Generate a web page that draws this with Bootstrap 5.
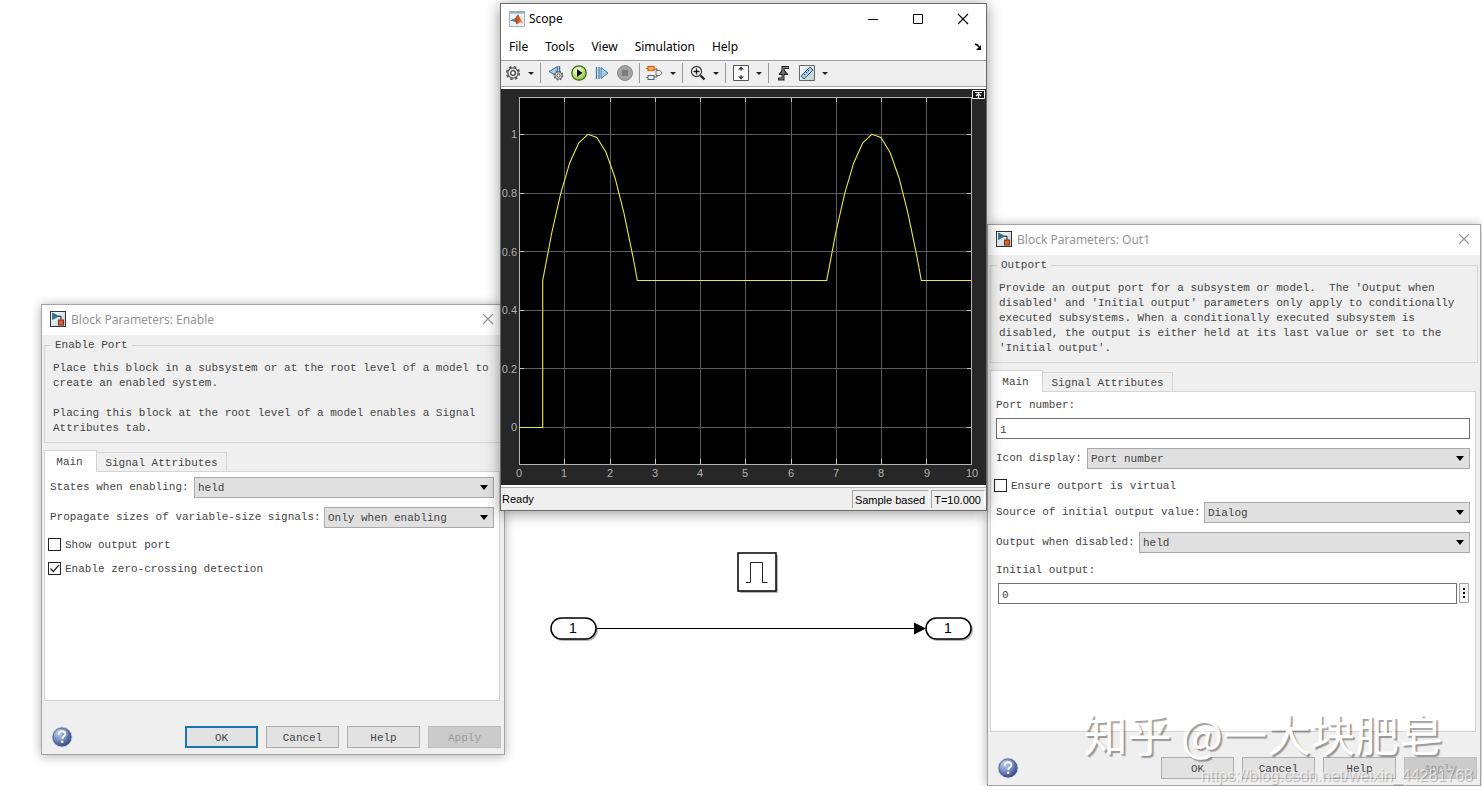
<!DOCTYPE html>
<html lang="en">
<head>
<meta charset="utf-8">
<meta name="viewport" content="width=device-width, initial-scale=1">
<title>Scope and block parameters</title>
<link href="https://cdn.jsdelivr.net/npm/bootstrap@5.3.0/dist/css/bootstrap.min.css" rel="stylesheet">
<style>
  :root { --ui: "Noto Sans", "Noto Sans CJK SC", sans-serif; --mono: "Liberation Mono", monospace; --panel: #efefef; --line: #d4d4d4; }
  body { background: #fff; font-family: var(--ui); font-size: 12px; line-height: 15px; color: #000; }
  .desktop { padding: 3px 1px 0 41px; }
  .win { border: 1px solid #a3a3a3; background: var(--panel); box-shadow: 0 1px 10px rgba(0,0,0,.32); min-width: 0; }
  .win-enable { flex: 462 1 0; margin-top: 301px; }
  .center-col { flex: 487 1 0; margin-left: -5px; z-index: 2; min-width: 0; }
  .win-outport { flex: 492 1 0; margin-top: 221px; }
  .win-scope { border-color: #6a6a6a; box-shadow: 0 2px 14px rgba(0,0,0,.42); }
  .plain { border: 0; background: none; padding: 0; line-height: 0; color: inherit; }
  svg { display: block; }

  /* parameter dialogs */
  .dlg-title { height: 30px; padding: 0 10px 2px 8px; gap: 5px; background: #fff; color: #949494; }
  .dlg-body { padding: 0 2px; font-family: var(--mono); font-size: 11px; color: #444; }
  .group { border: 1px solid var(--line); padding: 6px 8px; margin-bottom: 7px; }
  .group legend { float: none; width: auto; height: 20px; line-height: 20px; margin: 0 0 0 -2px; padding: 0 4px; font-size: 11px; }
  .group p { margin: 0; white-space: pre; }
  .tabs { align-items: flex-end; height: 21px; }
  .tabs button { border: 1px solid var(--line); border-bottom: 0; background: #f0f0f0; color: #444; height: 19px; width: 131px; padding: 2px 0 0; font-size: 11px; line-height: 15px; border-radius: 0; }
  .tabs button.active { background: #fff; height: 22px; width: 53px; margin: 0 -1px -1px 0; z-index: 1; padding: 1px 2px 0 0; }
  .pane { border: 1px solid var(--line); background: #fff; margin-right: 2px; padding: 5px 5px 5px 3px; gap: 10px; }
  .pane-enable { min-height: 230px; }
  .pane-outport { min-height: 341px; }
  .fld { padding-left: 2px; }
  .fld label { white-space: nowrap; }
  .fld .box, .fld select { font-size: 11px; height: 21px; line-height: 15px; border-radius: 0; color: #444; min-width: 0; flex: 1 1 0; }
  .fld .box { border: 1px solid #6f6f6f; background: #fff; padding: 2px 3px 0; margin: 0; }
  .fld select { appearance: none; border: 1px solid #a9a9a9; padding: 2px 18px 0 3px; background: #e0e0e0 url("data:image/svg+xml,%3Csvg xmlns='http://www.w3.org/2000/svg' width='8' height='5'%3E%3Cpath d='M0 0h8L4 5z' fill='%23000'/%3E%3C/svg%3E") no-repeat right 5px center; }
  .one { height: 20px; }
  .stack { gap: 5px; }
  .stack label { height: 16px; padding-top: 1px; }
  .with-more { gap: 2px; padding: 0 1px 0 2px; }
  .w-a { width: 144px; } .w-b { width: 274px; } .w-c { width: 91px; } .w-d { width: 208px; } .w-e { width: 143px; }
  .tick { height: 14px; gap: 4px; }
  .tick label { padding-top: 2px; }
  .tick input { appearance: none; width: 13px; height: 13px; border: 1px solid #222; margin: 0; background: #fff center no-repeat; }
  .tick input:checked { background-image: url("data:image/svg+xml,%3Csvg xmlns='http://www.w3.org/2000/svg' width='11' height='11'%3E%3Cpath d='M1.5 5.5l2.8 3L10 2' fill='none' stroke='%23222' stroke-width='1.2'/%3E%3C/svg%3E"); }
  .foot { padding: 25px 1px 6px 7px; gap: 8px; }
  .foot .push { width: 73px; height: 22px; padding: 2px 0 0; border: 1px solid #adadad; border-radius: 0; background: #e2e2e2; color: #444; font-size: 11px; line-height: 15px; }
  .foot .push.primary { border: 2px solid #1a75b5; }
  .foot .push:disabled { background: #cbcbcb; border-color: #c0c0c0; color: #9a9a9a; }

  /* scope window */
  .scope-title { height: 29px; padding: 0 17px 0 8px; gap: 33px; background: #fff; }
  .scope-menu { height: 27px; padding: 0 4px 0 8px; gap: 17px; background: #fff; }
  .scope-menu a { color: #000; text-decoration: none; }
  .toolbar { height: 29px; border-top: 1px solid #9c9c9c; border-bottom: 2px solid #fff; padding-bottom: 2px; box-shadow: inset 0 -1px #a4a4a4; }
  .toolbar button { width: 23px; flex: none; display: flex; justify-content: center; }
  .toolbar .drop { width: 13px; }
  .toolbar .drop::after { content: ""; border: 3px solid transparent; border-top-color: #222; border-bottom: 0; }
  .toolbar hr { width: 1px; height: 20px; margin: 0 3px; border: 0; background: #999; opacity: 1; flex: none; }
  .statusbar { height: 25px; border-top: 2px solid #fff; font: 11px/15px "Liberation Sans", Arial, sans-serif; padding: 1px 1px 0 1px; gap: 2px; box-shadow: inset 0 1px #b0b0b0; }
  .cell { height: 18px; padding: 2px 3px 0 2px; border-left: 1px solid #a6a6a6; border-top: 1px solid #a6a6a6; border-right: 1px solid #fff; }
  .plot text, .canvas text { font-family: "Liberation Sans", Arial, sans-serif; }

  /* watermarks lie over the output dialog */
  .wm { position: absolute; z-index: 3; pointer-events: none; white-space: nowrap; }
  .wm-name { right: 39px; top: 703px; font: 44px/60px "Noto Sans CJK SC", sans-serif; color: #fff; text-shadow: 2px 2px 1px rgba(0,0,0,.36); }
  .wm-url { right: 9px; top: 767px; font: 16px/18px "Liberation Sans", Arial, sans-serif; color: rgba(255,255,255,.6); text-shadow: 1px 1px 1px rgba(0,0,0,.25); }
</style>
</head>
<body class="position-relative overflow-hidden">
<svg width="0" height="0" class="position-absolute" aria-hidden="true">
  <defs>
    <linearGradient id="paper" x2="1" y2="1"><stop stop-color="#fff"/><stop offset="1" stop-color="#b9cbd6"/></linearGradient>
    <radialGradient id="orb" cx=".35" cy=".3" r=".8"><stop stop-color="#c3d0ee"/><stop offset=".5" stop-color="#7189c0"/><stop offset="1" stop-color="#1f2e66"/></radialGradient>
    <radialGradient id="go" cx=".4" cy=".3" r=".8"><stop stop-color="#fafff0"/><stop offset=".6" stop-color="#b5dc70"/><stop offset="1" stop-color="#6da52c"/></radialGradient>
    <linearGradient id="peak" x2="1"><stop stop-color="#3b2a4c"/><stop offset=".4" stop-color="#c33a1c"/><stop offset="1" stop-color="#ef8b35"/></linearGradient>
    <symbol id="blk" viewBox="0 0 16 16"><rect x=".5" y=".5" width="15" height="15" fill="url(#paper)" stroke="#333"/><path d="M2.500 2v6.500L8.500 5.200z" fill="#2b7896" stroke="#174f68" stroke-width=".6"/><path d="M8 5.200h3V9" fill="none" stroke="#222"/><rect x="8.500" y="9" width="5" height="5" fill="#d9643a" stroke="#7d2d16"/></symbol>
    <symbol id="help" viewBox="0 0 22 22"><circle cx="11" cy="11" r="10" fill="url(#orb)" stroke="#d0d3dc"/><circle cx="11" cy="11" r="9" fill="none" stroke="#51608f" stroke-width=".7"/><path d="M7.800 8.400c0-4.200 6.600-4.200 6.600-.4 0 2.300-3.200 2.300-3.200 5" fill="none" stroke="#fff" stroke-width="2"/><circle cx="11.200" cy="15.800" r="1.300" fill="#fff"/></symbol>
    <symbol id="cross" viewBox="0 0 12 12"><path d="M1 1l10 10M11 1L1 11" fill="none" stroke="currentColor" stroke-width="1.100"/></symbol>
    <symbol id="gear" viewBox="0 0 16 16"><circle cx="8" cy="8" r="6.300" fill="none" stroke="#555" stroke-width="1.600" stroke-dasharray="2.600 2.350"/><circle cx="8" cy="8" r="5.200" fill="#dcdcdc" stroke="#555" stroke-width="1.200"/><circle cx="8" cy="8" r="2.300" fill="#fff" stroke="#444" stroke-width="1.300"/></symbol>
  </defs>
</svg>

<main class="desktop d-flex align-items-start">

  <section class="win win-enable" aria-label="Block Parameters: Enable">
    <header class="dlg-title d-flex align-items-center">
      <svg width="16" height="16"><use href="#blk"/></svg>
      <span>Block Parameters: Enable</span>
      <button class="plain ms-auto" aria-label="Close"><svg width="12" height="12"><use href="#cross"/></svg></button>
    </header>
    <div class="dlg-body">
      <fieldset class="group">
        <legend>Enable Port</legend>
        <p>Place this block in a subsystem or at the root level of a model to
create an enabled system.

Placing this block at the root level of a model enables a Signal
Attributes tab.</p>
      </fieldset>
      <div class="tabs d-flex" role="tablist">
        <button class="active" role="tab" aria-selected="true">Main</button>
        <button role="tab" aria-selected="false">Signal Attributes</button>
      </div>
      <div class="pane pane-enable d-flex flex-column" role="tabpanel">
        <div class="fld one d-flex align-items-center">
          <label class="w-a" for="states">States when enabling:</label>
          <select id="states"><option>held</option><option>reset</option></select>
        </div>
        <div class="fld one d-flex align-items-center">
          <label class="w-b" for="propagate">Propagate sizes of variable-size signals:</label>
          <select id="propagate"><option>Only when enabling</option></select>
        </div>
        <div class="tick d-flex align-items-center"><input type="checkbox" id="showport"><label for="showport">Show output port</label></div>
        <div class="tick d-flex align-items-center"><input type="checkbox" id="zerocross" checked><label for="zerocross">Enable zero-crossing detection</label></div>
      </div>
      <footer class="foot d-flex align-items-center">
        <button class="plain me-auto" aria-label="About this block"><svg width="22" height="22"><use href="#help"/></svg></button>
        <button class="push primary">OK</button>
        <button class="push">Cancel</button>
        <button class="push">Help</button>
        <button class="push" disabled>Apply</button>
      </footer>
    </div>
  </section>

  <div class="center-col">
    <section class="win win-scope" aria-label="Scope">
      <header class="scope-title d-flex align-items-center">
        <div class="d-flex align-items-center gap-1 me-auto">
          <svg width="16" height="16" viewBox="0 0 16 16"><rect x=".5" y=".5" width="15" height="15" fill="#eef3f7" stroke="#9fb1bf"/><path d="M1 1.500h14" stroke="#8fa9bd" stroke-width="2"/><path d="M1.500 9.500L6 7.500l3-4.500 5 9.500-3-1.500-3 2.500-2-3z" fill="url(#peak)"/><path d="M1.500 9.500L6 7.500 7 9l-1 1.800z" fill="#4a86b4"/></svg>
          <span>Scope</span>
        </div>
        <button class="plain" aria-label="Minimize"><svg width="12" height="12"><path d="M1 6.500h10" stroke="#000"/></svg></button>
        <button class="plain" aria-label="Maximize"><svg width="12" height="12"><path d="M1.500 1.500h9v9h-9z" fill="none" stroke="#000"/></svg></button>
        <button class="plain" aria-label="Close"><svg width="12" height="12"><use href="#cross"/></svg></button>
      </header>
      <nav class="scope-menu d-flex align-items-center">
        <a href="#">File</a><a href="#">Tools</a><a href="#">View</a><a href="#">Simulation</a><a href="#">Help</a>
        <button class="plain ms-auto" aria-label="Dock"><svg width="8" height="8"><path d="M1 1.500c1.500-.5 2.500 0 4 2.500" fill="none" stroke="#000" stroke-width="1.500"/><path d="M7 2v5H2z"/></svg></button>
      </nav>
      <div class="toolbar d-flex align-items-center" role="toolbar" aria-label="Scope tools">
        <button class="plain" aria-label="Configuration"><svg width="16" height="16"><use href="#gear"/></svg></button>
        <button class="plain drop" aria-label="Configuration menu"></button>
        <hr>
        <button class="plain" aria-label="Step back"><svg width="16" height="16" viewBox="0 0 16 16"><path d="M9.500 1.500L1 6.500l8.500 5z" fill="#a5c8e2" stroke="#3c6d94"/><path d="M11.500 1v6" stroke="#3c6d94" stroke-width="1.500"/><svg x="5" y="5" width="11" height="11"><use href="#gear"/></svg></svg></button>
        <button class="plain" aria-label="Run"><svg width="16" height="16" viewBox="0 0 16 16"><circle cx="8" cy="8" r="7.200" fill="url(#go)" stroke="#3f6b15" stroke-width="1.300"/><path d="M6 4v8l5.500-4z" fill="#111"/></svg></button>
        <button class="plain" aria-label="Step forward"><svg width="14" height="14" viewBox="0 0 14 14"><path d="M1.500 1v12M4 1v12" stroke="#3d78a6" stroke-width="1.300"/><path d="M6 1.500v11L13 7z" fill="#a9d0ea" stroke="#3d78a6"/></svg></button>
        <button class="plain" aria-label="Stop" disabled><svg width="16" height="16" viewBox="0 0 16 16"><circle cx="8" cy="8" r="7.500" fill="#a3a3a3" stroke="#8c8c8c"/><rect x="5" y="5" width="6" height="6" fill="#7b7b7b"/></svg></button>
        <hr>
        <button class="plain" aria-label="Highlight block"><svg width="17" height="16" viewBox="0 0 17 16"><path d="M7 4h4v3M7 12h4V9" fill="none" stroke="#555"/><rect x="2" y="1.500" width="6" height="4" fill="#fbb45c" stroke="#d4661a" stroke-width="1.300"/><path d="M0 3.500h2M0 12.500h2" stroke="#d4661a"/><rect x="2" y="10.500" width="6" height="4" fill="#e6eef6" stroke="#48627a"/><path d="M10 5.500h4l2 2.500-2 2.500h-4z" fill="#e6eef6" stroke="#777"/></svg></button>
        <button class="plain drop" aria-label="Highlight menu"></button>
        <hr>
        <button class="plain" aria-label="Zoom in"><svg width="16" height="16" viewBox="0 0 16 16"><circle cx="6.500" cy="6.500" r="5" fill="#fff" stroke="#444" stroke-width="1.300"/><path d="M3.500 6.500h6M6.500 3.500v6" stroke="#111" stroke-width="1.300"/><path d="M10.500 10.500l4 4" stroke="#222" stroke-width="2.400"/></svg></button>
        <button class="plain drop" aria-label="Zoom menu"></button>
        <hr>
        <button class="plain" aria-label="Scale axes"><svg width="16" height="16" viewBox="0 0 16 16"><path d="M.5.5h15v15H.5z" fill="#fafafa" stroke="#555"/><path d="M8 1.500l3 3H5zM8 14.500l3-3H5z" fill="#333"/><path d="M8 3v3M8 10v3" stroke="#444"/></svg></button>
        <button class="plain drop" aria-label="Scale menu"></button>
        <hr>
        <button class="plain" aria-label="Triggers"><svg width="16" height="16" viewBox="0 0 16 16"><path d="M2 14h5V2.500h6" fill="none" stroke="#222" stroke-width="3"/><path d="M3 9.500L7 4l5 5.500z" fill="#555" stroke="#222"/><path d="M3 14h4V2.500h5.500" fill="none" stroke="#888"/></svg></button>
        <button class="plain" aria-label="Measurements"><svg width="16" height="16" viewBox="0 0 16 16"><path d="M.5.5h15v15H.5z" fill="url(#paper)" stroke="#666"/><path d="M2 11L11 2l3 3-9 9z" fill="#a9cce4" stroke="#335f86"/><path d="M4.500 8.500l1.500 1.500M6.500 6.500L8 8M8.500 4.500L10 6" stroke="#234"/></svg></button>
        <button class="plain drop" aria-label="Measurements menu"></button>
      </div>
      <svg class="plot w-100" viewBox="0 0 485 396" role="img" aria-label="Signal over time">
        <rect width="485" height="396" fill="#272727"/>
        <rect x="18.500" y="8.500" width="452" height="367" fill="#000"/>
        <path d="M63.500 8v367M109.500 8v367M154.500 8v367M199.500 8v367M244.500 8v367M290.500 8v367M335.500 8v367M380.500 8v367M425.500 8v367M19 45.500h451M19 104.500h451M19 162.500h451M19 221.500h451M19 279.500h451M19 338.500h451" stroke="#5c5c5c"/>
        <path d="M63.500 8v5m0 357v5M109.500 8v5m0 357v5M154.500 8v5m0 357v5M199.500 8v5m0 357v5M244.500 8v5m0 357v5M290.500 8v5m0 357v5M335.500 8v5m0 357v5M380.500 8v5m0 357v5M425.500 8v5m0 357v5M19 45.500h4m443 0h4M19 104.500h4m443 0h4M19 162.500h4m443 0h4M19 221.500h4m443 0h4M19 279.500h4m443 0h4M19 338.500h4m443 0h4" stroke="#c4c4c4"/>
        <rect x="18.500" y="8.500" width="452" height="367" fill="none" stroke="#b4b4b4"/>
        <polyline fill="none" stroke="#e9e94b" stroke-width="1.100" points="18,338.500 41.700,338.500 41.700,191.500 50.700,144 59.800,104.200 68.800,73.700 77.800,53.800 86.900,45.300 95.900,48.500 105,63.200 114,88.700 123,124.400 132.100,168.400 136.300,191.500 325.700,191.500 334.700,144 343.800,104.200 352.800,73.700 361.800,53.800 370.900,45.300 379.900,48.500 389,63.200 398,88.700 407,124.400 416.100,168.400 420.300,191.500 470,191.500"/>
        <g fill="#b0b0b0" font-size="11" text-anchor="end">
          <text x="16" y="49">1</text><text x="16" y="108">0.8</text><text x="16" y="167">0.6</text><text x="16" y="225">0.4</text><text x="16" y="284">0.2</text><text x="16" y="342">0</text>
        </g>
        <g fill="#b0b0b0" font-size="11" text-anchor="middle">
          <text x="18" y="388">0</text><text x="63" y="388">1</text><text x="109" y="388">2</text><text x="154" y="388">3</text><text x="199" y="388">4</text><text x="244" y="388">5</text><text x="290" y="388">6</text><text x="335" y="388">7</text><text x="380" y="388">8</text><text x="426" y="388">9</text><text x="471" y="388">10</text>
        </g>
        <path d="M471.500 1.500h12v8h-12z" fill="#111" stroke="#fff"/><path d="M474 3.500h7M477.500 4v5M475 7l2.500-2.500L480 7" fill="none" stroke="#fff" stroke-width="1.200"/>
      </svg>
      <div class="statusbar d-flex align-items-center">
        <span class="me-auto">Ready</span>
        <span class="cell">Sample based</span>
        <span class="cell">T=10.000</span>
      </div>
    </section>
    <svg class="canvas w-100" viewBox="0 0 487 140" role="img" aria-label="Enabled subsystem diagram">
      <g fill="#888" opacity=".6"><rect x="240" y="44" width="38" height="38"/><rect x="52" y="108" width="46" height="22" rx="11"/><rect x="427" y="108" width="46" height="22" rx="11"/></g>
      <g fill="#fff" stroke="#000" stroke-width="1.500">
        <rect x="238" y="42" width="38" height="38"/>
        <rect x="51" y="107" width="45" height="21" rx="10.500"/>
        <rect x="426" y="107" width="45" height="21" rx="10.500"/>
      </g>
      <path d="M246 71.500h4.500v-20h12v20h5" fill="none" stroke="#222"/>
      <path d="M97 117.500h318" stroke="#000"/><path d="M414 111.500v12l12-6z"/>
      <g font-size="14" text-anchor="middle"><text x="73" y="122">1</text><text x="448" y="122">1</text></g>
    </svg>
  </div>

  <section class="win win-outport" aria-label="Block Parameters: Out1">
    <header class="dlg-title d-flex align-items-center">
      <svg width="16" height="16"><use href="#blk"/></svg>
      <span>Block Parameters: Out1</span>
      <button class="plain ms-auto" aria-label="Close"><svg width="12" height="12"><use href="#cross"/></svg></button>
    </header>
    <div class="dlg-body">
      <fieldset class="group">
        <legend>Outport</legend>
        <p>Provide an output port for a subsystem or model.  The 'Output when
disabled' and 'Initial output' parameters only apply to conditionally
executed subsystems. When a conditionally executed subsystem is
disabled, the output is either held at its last value or set to the
'Initial output'.</p>
      </fieldset>
      <div class="tabs d-flex" role="tablist">
        <button class="active" role="tab" aria-selected="true">Main</button>
        <button role="tab" aria-selected="false">Signal Attributes</button>
      </div>
      <div class="pane pane-outport d-flex flex-column" role="tabpanel">
        <div class="fld stack d-flex flex-column">
          <label for="portnum">Port number:</label>
          <div class="one d-flex"><input class="box" id="portnum" type="text" value="1"></div>
        </div>
        <div class="fld one d-flex align-items-center">
          <label class="w-c" for="icon">Icon display:</label>
          <select id="icon"><option>Port number</option></select>
        </div>
        <div class="tick d-flex align-items-center"><input type="checkbox" id="virtual"><label for="virtual">Ensure outport is virtual</label></div>
        <div class="fld one d-flex align-items-center">
          <label class="w-d" for="source">Source of initial output value:</label>
          <select id="source"><option>Dialog</option></select>
        </div>
        <div class="fld one d-flex align-items-center">
          <label class="w-e" for="disabled">Output when disabled:</label>
          <select id="disabled"><option>held</option></select>
        </div>
        <div class="fld stack d-flex flex-column">
          <label for="initial">Initial output:</label>
          <div class="one with-more d-flex"><input class="box" id="initial" type="text" value="0">
            <button class="plain" aria-label="More options"><svg width="10" height="21"><path d="M.5.5h9v19h-9z" fill="#f4f4f4" stroke="#a5a5a5"/><path d="M4 5h2v2H4zM4 9h2v2H4zM4 13h2v2H4z"/></svg></button></div>
        </div>
      </div>
      <footer class="foot d-flex align-items-center">
        <button class="plain me-auto" aria-label="About this block"><svg width="22" height="22"><use href="#help"/></svg></button>
        <button class="push">OK</button>
        <button class="push">Cancel</button>
        <button class="push">Help</button>
        <button class="push" disabled>Apply</button>
      </footer>
    </div>
  </section>
</main>

<div class="wm wm-name">知乎 @一大块肥皂</div>
<div class="wm wm-url">https://blog.csdn.net/weixin_44281768</div>
<script src="https://cdn.jsdelivr.net/npm/bootstrap@5.3.0/dist/js/bootstrap.bundle.min.js"></script>
</body>
</html>
